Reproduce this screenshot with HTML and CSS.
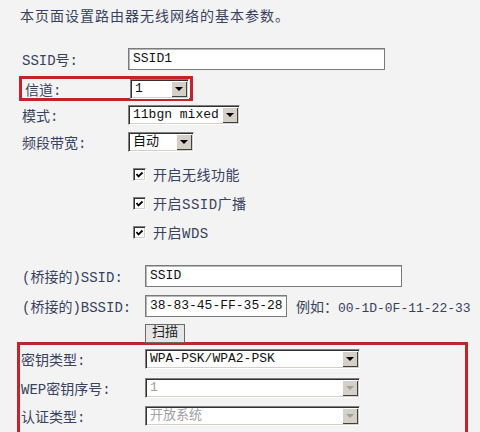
FILE: index.html
```html
<!DOCTYPE html>
<html lang="zh-CN">
<head>
  <meta charset="UTF-8" />
  <title>无线网络基本设置</title>
  <link rel="stylesheet" href="styles.css">
</head>
<body>
  <p class="intro">本页面设置路由器无线网络的基本参数。</p>

  <div class="form">
    <!-- SSID -->
    <div class="row r-ssid">
      <span class="lbl">SSID号:</span>
      <span class="inp inp-ssid">SSID1</span>
    </div>

    <!-- 信道 (红框) -->
    <div class="row hl-ch">
      <span class="lbl">信道:</span>
      <span class="sel sel-ch"><span class="txt">1</span><span class="arr"><i></i></span></span>
    </div>

    <div class="row r-mode">
      <span class="lbl">模式:</span>
      <span class="sel sel-mode"><span class="txt">11bgn mixed</span><span class="arr"><i></i></span></span>
    </div>

    <div class="row r-bw">
      <span class="lbl">频段带宽:</span>
      <span class="sel sel-bw"><span class="txt">自动</span><span class="arr"><i></i></span></span>
    </div>

    <!-- 复选框 -->
    <div class="chk first">
      <span class="box"><svg viewBox="0 0 11 11" width="11" height="11"><polyline points="2.5,5 4.5,7.5 8.5,3.5" /></svg></span>
      <span>开启无线功能</span>
    </div>
    <div class="chk">
      <span class="box"><svg viewBox="0 0 11 11" width="11" height="11"><polyline points="2.5,5 4.5,7.5 8.5,3.5" /></svg></span>
      <span>开启SSID广播</span>
    </div>
    <div class="chk">
      <span class="box"><svg viewBox="0 0 11 11" width="11" height="11"><polyline points="2.5,5 4.5,7.5 8.5,3.5" /></svg></span>
      <span>开启WDS</span>
    </div>

    <!-- WDS 桥接 -->
    <div class="row r-bssid-1">
      <span class="lbl lbl-wide">(桥接的)SSID:</span>
      <span class="inp inp-bridge">SSID</span>
    </div>
    <div class="row r-bssid-2">
      <span class="lbl lbl-wide">(桥接的)BSSID:</span>
      <span class="inp inp-mac">38-83-45-FF-35-28</span>
      <span class="hint">例如：<span class="mono">00-1D-0F-11-22-33</span></span>
    </div>
    <div class="row r-scan">
      <span class="lbl lbl-wide"></span>
      <span class="btn">扫描</span>
    </div>

    <!-- 加密 (红框) -->
    <div class="hl-sec">
      <div class="row">
        <span class="lbl lbl-sec">密钥类型:</span>
        <span class="sel sel-key"><span class="txt">WPA-PSK/WPA2-PSK</span><span class="arr"><i></i></span></span>
      </div>
      <div class="row">
        <span class="lbl lbl-sec">WEP密钥序号:</span>
        <span class="sel sel-key off"><span class="txt">1</span><span class="arr"><i></i></span></span>
      </div>
      <div class="row">
        <span class="lbl lbl-sec">认证类型:</span>
        <span class="sel sel-key off"><span class="txt">开放系统</span><span class="arr"><i></i></span></span>
      </div>
    </div>
  </div>
</body>
</html>
```

FILE: styles.css
```css
/* base */
body {
  margin: 0;
  background-color: #f3f3f3;
  color: #37425f;
  font-family: "Liberation Mono", "Noto Sans CJK SC", monospace;
  font-size: 14px;
  overflow: hidden;
}

.intro {
  margin: 0;
  padding: 8px 0 0 20px;
  line-height: 18px;
  letter-spacing: 1px;
}

.form {
  padding-left: 22px;
  margin-top: 22px;
}

.row {
  display: flex;
  align-items: center;
  height: 20px;
}

.lbl {
  width: 106px;
  flex-shrink: 0;
  white-space: nowrap;
}

.lbl-wide { width: 123px; }

/* spacing of the rows */
.r-ssid { height: 22px; }
.r-mode { margin-top: 4px; }
.r-bw { margin-top: 7px; }
.r-bssid-1 { height: 22px; margin-top: 23px; }
.r-bssid-2 { height: 22px; margin-top: 8px; }
.r-scan { height: 18px; margin-top: 7px; }

/* red highlight boxes */
.hl-ch {
  margin: 6px 0 0 -3px;
  width: 174px;
  height: 25px;
  box-sizing: border-box;
  border: 3px solid #c4232b;
}

.hl-ch .lbl {
  width: 105px;
  padding-left: 3px;
}

.hl-sec {
  margin-left: -5px;
  width: 451px;
  box-sizing: border-box;
  border: 3px solid #c4232b;
  border-bottom: none;
  padding: 4px 0 20px 1px;
}

.hl-sec .row + .row { margin-top: 9px; }
.hl-sec .row:last-child { margin-top: 8px; }

.lbl-sec { width: 124px; }

/* text inputs */
.inp {
  box-sizing: border-box;
  height: 22px;
  background: #fff;
  border: 1px solid #7a7a7a;
  box-shadow: inset 1px 1px 0 #b8b8b8;
  color: #111;
  font-size: 13px;
  line-height: 20px;
  padding-left: 4px;
}

.inp-ssid { width: 257px; }
.inp-bridge { width: 257px; }
.inp-mac { width: 142px; }

.hint {
  margin-left: 9px;
  white-space: nowrap;
}

.mono { font-size: 13px; }

.btn {
  box-sizing: border-box;
  height: 19px;
  width: 40px;
  background: #e6e6e6;
  border: 1px solid #6a6a6a;
  color: #222;
  font-size: 13px;
  line-height: 16px;
  text-align: center;
}

/* windows-classic selects */
.sel {
  display: flex;
  box-sizing: border-box;
  height: 20px;
  background: #fff;
  border: 1px solid;
  border-color: #808080 #fff #fff #808080;
  box-shadow: inset 1px 1px 0 #303030, inset -1px -1px 0 #d4d0c8;
  padding: 1px;
  color: #111;
}

.sel .txt {
  flex: 1;
  padding-left: 3px;
  font-size: 13px;
  line-height: 16px;
  white-space: nowrap;
  overflow: hidden;
}

.sel .arr {
  width: 16px;
  background: #d4d0c8;
  box-shadow: inset 1px 1px 0 #fff, inset -1px -1px 0 #404040;
  display: flex;
  align-items: center;
  justify-content: center;
}

.sel .arr i {
  width: 0;
  height: 0;
  border-left: 4px solid transparent;
  border-right: 4px solid transparent;
  border-top: 4px solid #000;
}

.sel.off .txt { color: #a0a0a0; }
.sel.off .arr i { border-top-color: #a0a0a0; }

.sel-ch { width: 59px; }
.sel-mode { width: 112px; }
.sel-bw { width: 66px; }
.sel-key { width: 215px; }

/* checkboxes */
.chk {
  display: flex;
  align-items: center;
  height: 20px;
  margin-top: 9px;
  margin-left: 111px;
  letter-spacing: 0.5px;
}

.chk.first { margin-top: 12px; }

.box {
  box-sizing: border-box;
  width: 13px;
  height: 13px;
  margin-right: 7px;
  background: #fff;
  border: 1px solid;
  border-color: #808080 #fff #fff #808080;
  box-shadow: inset 1px 1px 0 #303030, inset -1px -1px 0 #d4d0c8;
  display: flex;
  align-items: center;
  justify-content: center;
}

.box svg polyline {
  fill: none;
  stroke: #000;
  stroke-width: 1.8;
}
```
